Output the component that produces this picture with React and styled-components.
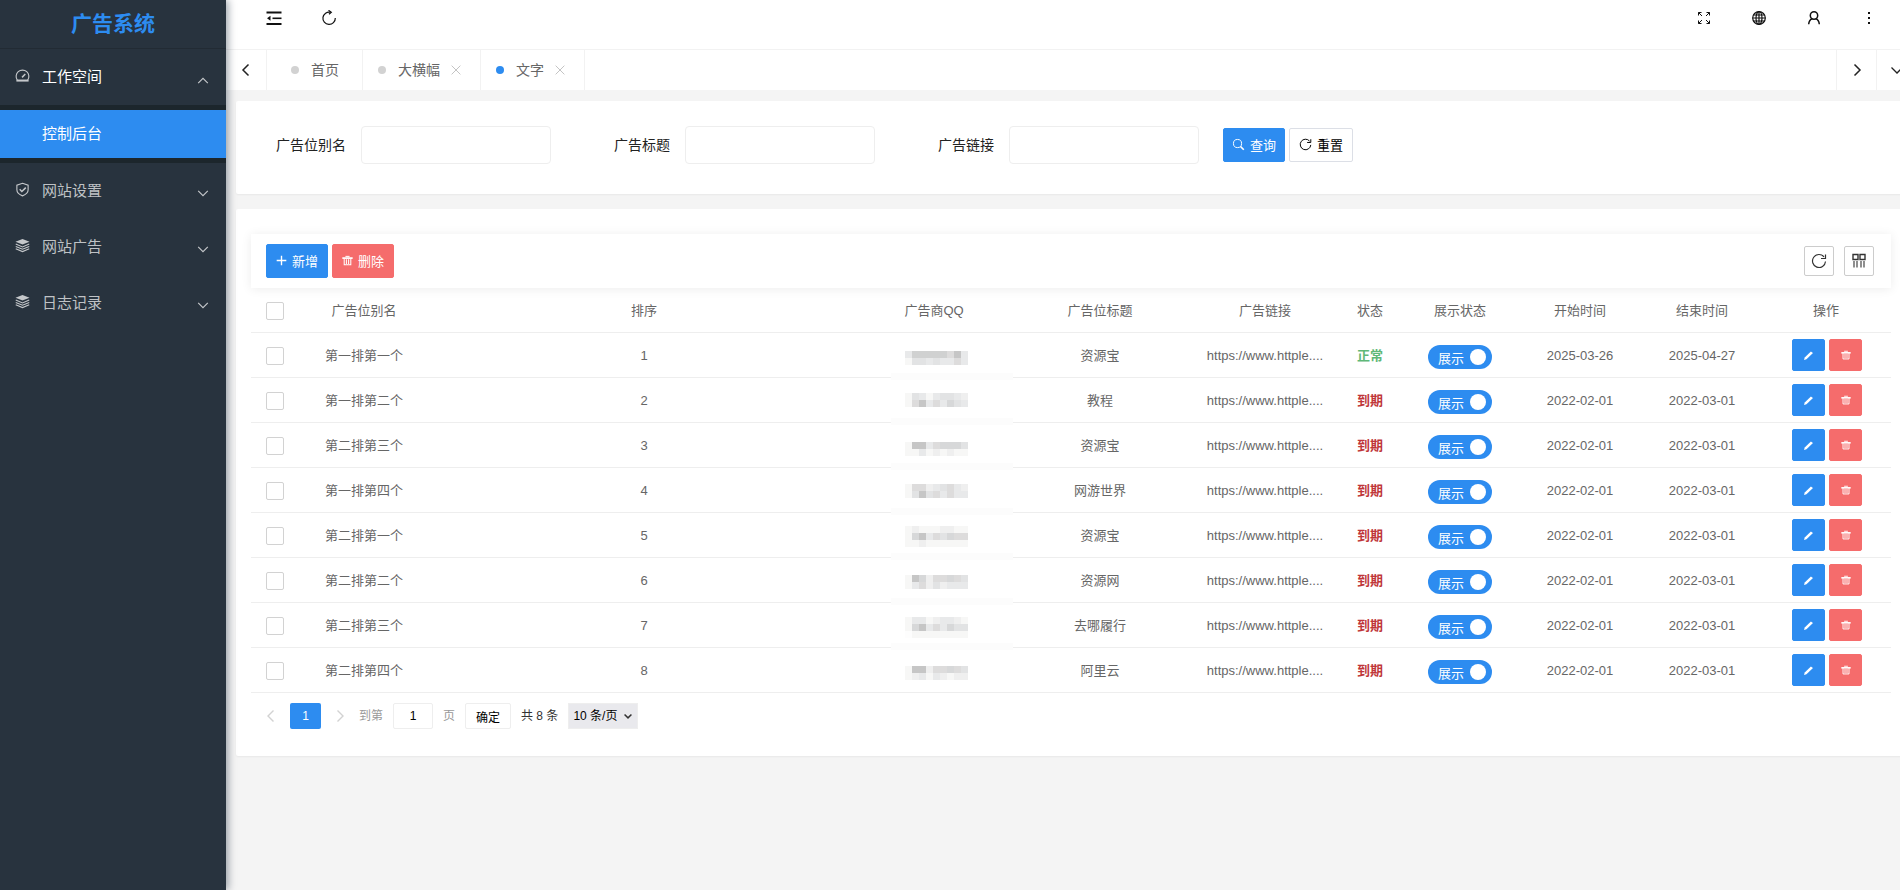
import React, { useState } from "react";
import styled, { createGlobalStyle, css } from "styled-components";

const GlobalStyle = createGlobalStyle`
  * {
    box-sizing: border-box;
  }
  body {
    margin: 0;
    background: #f4f4f4;
    color: #222;
    font: 14px/24px "Liberation Sans", "Noto Sans CJK SC", sans-serif;
    overflow-x: hidden;
  }
  button, input, select {
    font-family: inherit;
  }
  button {
    cursor: pointer;
  }
  svg {
    display: block;
    flex: none;
  }
`;

const paths = {
  shrink: (
    <>
      <path d="M.5 2.5h15M.5 14h15" strokeWidth="1.8" />
      <path d="M6.5 8.3h9" strokeWidth="1.6" />
      <path d="M4.5 5.8v5L1 8.3z" fill="currentColor" stroke="none" />
    </>
  ),
  refresh: (
    <>
      <path d="M9.5 2.2A6.2 6.2 0 1 0 14.3 8" />
      <path d="M7.5.3l2.8 1.9L8 4.3" />
    </>
  ),
  reload: (
    <>
      <path d="M14.5 8.5A6.5 6.5 0 1 1 13 3.8" />
      <path d="M14.5 1.5v4H10" />
    </>
  ),
  expand: (
    <path d="M2.5 5.5v-3h3M2.5 2.5L6 6M10.5 2.5h3v3M13.5 2.5L10 6M2.5 10.5v3h3M2.5 13.5L6 10M13.5 10.5v3h-3M13.5 13.5L10 10" />
  ),
  globe: (
    <>
      <circle cx="8" cy="8" r="6.3" />
      <ellipse cx="8" cy="8" rx="3" ry="6.3" />
      <path d="M8 1.7v12.6M1.7 8h12.6M2.7 5h10.6M2.7 11h10.6" />
    </>
  ),
  user: (
    <>
      <circle cx="8" cy="5.5" r="3.7" />
      <path d="M2.7 14.3c.2-3 1.6-5 3.6-5.6M13.3 14.3c-.2-3-1.6-5-3.6-5.6" />
    </>
  ),
  more: <path d="M7 2h2v2H7zM7 7h2v2H7zM7 12h2v2H7z" fill="currentColor" stroke="none" />,
  left: <path d="M10.5 2.5L5 8l5.5 5.5" />,
  right: <path d="M5.5 2.5L11 8l-5.5 5.5" />,
  down: <path d="M2.5 5.5L8 11l5.5-5.5" />,
  up: <path d="M2.5 10.5L8 5l5.5 5.5" />,
  close: <path d="M3 3l10 10M13 3L3 13" />,
  plus: <path d="M8 1v14M1 8h14" strokeWidth="2" />,
  search: (
    <>
      <circle cx="6.8" cy="6.8" r="5" />
      <path d="M10.5 10.5l4 4" strokeWidth="2" />
    </>
  ),
  trash: (
    <>
      <path d="M5 2h6" strokeWidth="1.5" />
      <path d="M.5 4.5h15" strokeWidth="2.5" />
      <path d="M3.2 5v9.3h9.6V5M6.4 6v7M9.6 6v7" strokeWidth="1.5" />
    </>
  ),
  edit: <path d="M1.5 14.5l1-3.5 9-9 3 2.5L5 13.5z" fill="currentColor" stroke="none" />,
  dashboard: (
    <>
      <path d="M2.5 13A6.8 6.8 0 1 1 13.5 13z" />
      <path d="M7.5 10L11 6.5" strokeWidth="1.6" />
      <path d="M1.5 13.5h13" strokeWidth="2" />
    </>
  ),
  shield: (
    <>
      <path d="M8 1.3l6 2v5c0 3-2.5 5.2-6 6.5-3.5-1.3-6-3.5-6-6.5v-5z" />
      <path d="M5 7.8l2.3 2.3L11.5 6" strokeWidth="1.6" />
    </>
  ),
  layers: (
    <>
      <path d="M8 1l7.5 3L8 7 .5 4z" fill="currentColor" stroke="none" />
      <path d="M.8 6.5L8 9.5l7.2-3M.8 9L8 12l7.2-3M.8 11.5L8 14.5l7.2-3" />
    </>
  ),
  columns: (
    <>
      <path d="M2 1.5h5v5H2zM9 1.5h5v5H9z" strokeWidth="1.4" />
      <path d="M3 8v6.5M6 8v6.5M10 8v6.5M13 8v6.5" />
    </>
  ),
};

const Icon = ({ name, size = 16, stroke = 1.2 }) => (
  <svg
    width={size}
    height={size}
    viewBox="0 0 16 16"
    fill="none"
    stroke="currentColor"
    strokeWidth={stroke}
    aria-hidden="true"
  >
    {paths[name]}
  </svg>
);

// obscured account numbers: one digit per block, the higher the darker
const mosaics = [
  { top: 18, rows: ["377777583", "144343353"] },
  { top: 15, rows: ["143134432", "158353643"] },
  { top: 19, rows: ["188356664", "113121211"] },
  { top: 16, rows: ["155234532", "148453533"] },
  { top: 13, rows: ["121112211", "168354655", "112111111"] },
  { top: 17, rows: ["186255654", "135242333"] },
  { top: 14, rows: ["133123321", "168353644", "011111111"] },
  { top: 18, rows: ["188255654", "123132122"] },
];
const greys = ["#fdfdfd", "#f7f7f6", "#efefef", "#e8e9ea", "#e2e3e4", "#dddcdc", "#d7d8d9", "#d0d1d1", "#c6c6c6"];

const Mosaic = ({ index }) => {
  const { top, rows } = mosaics[index];
  return (
    <MosaicSvg width="122" height="47" viewBox="0 0 122 47" shapeRendering="crispEdges">
      {index < 7 && <rect x="0" y="40" width="122" height="7" fill="#fcfcfc" />}
      {rows.map((row, y) =>
        row.split("").map((level, x) => (
          <rect
            key={`${x}-${y}`}
            x={14 + x * 7}
            y={top + y * 7}
            width="7"
            height="7"
            fill={greys[level]}
          />
        ))
      )}
    </MosaicSvg>
  );
};

const menus = [
  { icon: "dashboard", label: "工作空间", open: true, items: ["控制后台"] },
  { icon: "shield", label: "网站设置", items: [] },
  { icon: "layers", label: "网站广告", items: [] },
  { icon: "layers", label: "日志记录", items: [] },
];

const tabs = [
  { label: "首页" },
  { label: "大横幅", closable: true },
  { label: "文字", closable: true, active: true },
];

const ads = [
  { name: "第一排第一个", title: "资源宝", ok: true, start: "2025-03-26", end: "2025-04-27" },
  { name: "第一排第二个", title: "教程" },
  { name: "第二排第三个", title: "资源宝" },
  { name: "第一排第四个", title: "网游世界" },
  { name: "第二排第一个", title: "资源宝" },
  { name: "第二排第二个", title: "资源网" },
  { name: "第二排第三个", title: "去哪履行" },
  { name: "第二排第四个", title: "阿里云" },
];

const columns = [
  { label: "广告位别名", width: 126 },
  { label: "排序" },
  { label: "广告商QQ", width: 146 },
  { label: "广告位标题", width: 186 },
  { label: "广告链接", width: 144 },
  { label: "状态", width: 66 },
  { label: "展示状态", width: 114 },
  { label: "开始时间", width: 126 },
  { label: "结束时间", width: 118 },
  { label: "操作", width: 130 },
];

const App = () => {
  const [page, setPage] = useState("1");
  return (
    <Layout>
      <GlobalStyle />
      <Sidebar>
        <Logo>广告系统</Logo>
        <nav>
          {menus.map((menu) => (
            <React.Fragment key={menu.label}>
              <MenuButton $open={menu.open}>
                <Icon name={menu.icon} size={15} />
                <span>{menu.label}</span>
                <Icon name={menu.open ? "up" : "down"} size={14} stroke={1.3} />
              </MenuButton>
              {menu.open && (
                <SubMenu>
                  {menu.items.map((item) => (
                    <SubLink key={item} href="#">
                      {item}
                    </SubLink>
                  ))}
                </SubMenu>
              )}
            </React.Fragment>
          ))}
        </nav>
      </Sidebar>
      <Body>
        <Main>
          <Header>
            <HeaderButton aria-label="收起菜单"><Icon name="shrink" /></HeaderButton>
            <HeaderButton aria-label="刷新"><Icon name="refresh" /></HeaderButton>
            <Spacer />
            <HeaderButton aria-label="全屏"><Icon name="expand" stroke={1} /></HeaderButton>
            <HeaderButton aria-label="网站"><Icon name="globe" /></HeaderButton>
            <HeaderButton aria-label="用户"><Icon name="user" stroke={1.5} /></HeaderButton>
            <HeaderButton aria-label="更多"><Icon name="more" /></HeaderButton>
          </Header>
          <TabBar>
            <TabArrow aria-label="向左" $side="left"><Icon name="left" stroke={1.5} /></TabArrow>
            {tabs.map((tab) => (
              <Tab key={tab.label} $closable={tab.closable}>
                <Dot $active={tab.active} />
                <TabLink href="#">{tab.label}</TabLink>
                {tab.closable && (
                  <CloseButton aria-label="关闭"><Icon name="close" size={14} stroke={1} /></CloseButton>
                )}
              </Tab>
            ))}
            <Spacer />
            <TabArrow aria-label="向右"><Icon name="right" stroke={1.5} /></TabArrow>
            <TabArrow aria-label="展开"><Icon name="down" stroke={1.3} /></TabArrow>
          </TabBar>
          <Content>
            <SearchCard>
              {["广告位别名", "广告标题", "广告链接"].map((label, i) => (
                <Field key={label}>
                  <label htmlFor={`field-${i}`}>{label}</label>
                  <TextInput id={`field-${i}`} />
                </Field>
              ))}
              <SearchButtons>
                <Button $kind="primary"><Icon name="search" size={13} />查询</Button>
                <ResetButton><Icon name="reload" size={13} />重置</ResetButton>
              </SearchButtons>
            </SearchCard>
            <TableCard>
              <Toolbar>
                <Button $kind="primary"><Icon name="plus" size={11} />新增</Button>
                <Button $kind="danger"><Icon name="trash" size={11} />删除</Button>
                <Spacer />
                <ToolButton aria-label="刷新表格"><Icon name="reload" stroke={1.2} /></ToolButton>
                <ToolButton aria-label="筛选列"><Icon name="columns" stroke={1.1} /></ToolButton>
              </Toolbar>
              <Table>
                <thead>
                  <tr>
                    <Th $width={50}><Checkbox type="checkbox" aria-label="全选" /></Th>
                    {columns.map((col) => (
                      <Th key={col.label} $width={col.width}>{col.label}</Th>
                    ))}
                  </tr>
                </thead>
                <tbody>
                  {ads.map((ad, i) => (
                    <tr key={i}>
                      <Td><Checkbox type="checkbox" aria-label={ad.name} /></Td>
                      <Td>{ad.name}</Td>
                      <Td>{i + 1}</Td>
                      <MosaicTd><Mosaic index={i} /></MosaicTd>
                      <Td>{ad.title}</Td>
                      <Td>https://www.httple....</Td>
                      <Td><Status $ok={ad.ok}>{ad.ok ? "正常" : "到期"}</Status></Td>
                      <Td>
                        <Switch role="switch" aria-checked="true">展示<Knob /></Switch>
                      </Td>
                      <Td>{ad.start || "2022-02-01"}</Td>
                      <Td>{ad.end || "2022-03-01"}</Td>
                      <Td>
                        <Actions>
                          <ActionButton $kind="primary" aria-label="编辑"><Icon name="edit" size={11} /></ActionButton>
                          <ActionButton $kind="danger" aria-label="删除"><Icon name="trash" size={10} /></ActionButton>
                        </Actions>
                      </Td>
                    </tr>
                  ))}
                </tbody>
              </Table>
              <Pager>
                <PageArrow aria-label="上一页"><Icon name="left" stroke={1.4} /></PageArrow>
                <PageCurrent>1</PageCurrent>
                <PageArrow aria-label="下一页"><Icon name="right" stroke={1.4} /></PageArrow>
                <PageJump>
                  到第
                  <PageInput aria-label="页码" value={page} onChange={(e) => setPage(e.target.value)} />
                  页
                </PageJump>
                <PageConfirm>确定</PageConfirm>
                <span>共 8 条</span>
                <PageSize>
                  <select aria-label="每页条数">
                    <option>10 条/页</option>
                    <option>20 条/页</option>
                  </select>
                  <Icon name="down" size={10} stroke={2.4} />
                </PageSize>
              </Pager>
            </TableCard>
          </Content>
        </Main>
      </Body>
    </Layout>
  );
};

const MosaicSvg = styled.svg`
  position: absolute;
  top: 0;
  left: 30px;
`;

const Layout = styled.div`
  display: flex;
  min-height: 100vh;
`;

const Sidebar = styled.aside`
  flex: none;
  width: 226px;
  background: #28333e;
  box-shadow: 2px 0 8px rgba(0, 21, 41, 0.4);
  z-index: 1;
`;

const Logo = styled.h1`
  margin: 0;
  height: 49px;
  border-bottom: 1px solid #222b34;
  color: #2d8cf0;
  font-size: 21px;
  line-height: 48px;
  text-align: center;
`;

const MenuButton = styled.button`
  display: flex;
  align-items: center;
  gap: 12px;
  width: 100%;
  height: 56px;
  padding: 0 16px 3px 15px;
  border: 0;
  background: none;
  color: ${(p) => (p.$open ? "#fff" : "#bfc2c5")};
  font-size: 15px;
  text-align: left;

  span {
    flex: 1;
  }
  svg {
    color: #c5c8cb;
  }
  svg:last-child {
    margin-top: ${(p) => (p.$open ? 11 : 6)}px;
  }
`;

const SubMenu = styled.div`
  padding: 5px 0;
  background: #1c262c;
`;

const SubLink = styled.a`
  display: block;
  padding-left: 42px;
  background: #2d8cf0;
  color: #fff;
  font-size: 15px;
  line-height: 48px;
  text-decoration: none;
`;

const Body = styled.div`
  flex: 1;
  min-width: 0;
  overflow: hidden;
`;

/* the content frame runs one scrollbar wider than the window */
const Main = styled.div`
  width: calc(100% + 16px);
`;

const Spacer = styled.div`
  flex: 1;
`;

const Header = styled.header`
  display: flex;
  height: 50px;
  padding: 0 20px;
  border-bottom: 1px solid #f2f2f2;
  background: #fff;
`;

const HeaderButton = styled.button`
  display: flex;
  justify-content: center;
  width: 55px;
  padding: 10px 0 0;
  border: 0;
  background: none;
  color: #111;
`;

const TabBar = styled.div`
  display: flex;
  height: 40px;
  background: #fff;
`;

const TabArrow = styled.button`
  display: flex;
  align-items: center;
  justify-content: center;
  width: ${(p) => (p.$side === "left" ? 41 : 40)}px;
  padding: 0;
  border: 0 solid #f2f2f2;
  border-${(p) => (p.$side === "left" ? "right" : "left")}-width: 1px;
  background: none;
  color: #222;
`;

const Tab = styled.div`
  display: flex;
  align-items: center;
  padding: 0 ${(p) => (p.$closable ? 17 : 23)}px 0 ${(p) => (p.$closable ? 15 : 24)}px;
  border-right: 1px solid #f2f2f2;
  color: #666;
`;

const Dot = styled.span`
  width: 8px;
  height: 8px;
  margin-right: 12px;
  border-radius: 50%;
  background: ${(p) => (p.$active ? "#2d8cf0" : "#d2d2d2")};
`;

const TabLink = styled.a`
  color: inherit;
  text-decoration: none;
`;

const CloseButton = styled.button`
  margin-left: 9px;
  padding: 0;
  border: 0;
  background: none;
  color: #bbb;
`;

const Content = styled.main`
  padding: 11px 10px;
`;

const Card = styled.section`
  border-radius: 2px;
  background: #fff;
  box-shadow: 0 1px 2px rgba(0, 0, 0, 0.05);
`;

const SearchCard = styled(Card)`
  display: flex;
  padding: 25px 15px 30px;
  margin-bottom: 15px;
`;

const Field = styled.div`
  display: flex;
  align-items: center;

  label {
    width: 110px;
    padding-right: 15px;
    text-align: right;
  }
  & + & label {
    width: 134px;
  }
`;

const TextInput = styled.input`
  width: 190px;
  height: 38px;
  padding: 0 10px;
  border: 1px solid #eee;
  border-radius: 4px;
  outline: none;
`;

const SearchButtons = styled.div`
  display: flex;
  align-items: center;
  gap: 4px;
  padding-left: 24px;
`;

const kinds = {
  primary: css`
    border-color: #2d8cf0;
    background: #2d8cf0;
    color: #fff;
  `,
  danger: css`
    border-color: #f56c6c;
    background: #f56c6c;
    color: #fff;
  `,
};

const Button = styled.button`
  display: flex;
  align-items: center;
  justify-content: center;
  gap: 5px;
  width: 62px;
  height: 34px;
  padding: 0 0 2px;
  border: 1px solid #dcdfe6;
  border-radius: 2px;
  background: #fff;
  color: #000;
  font-size: 13px;
  ${(p) => kinds[p.$kind]}
`;

const ResetButton = styled(Button)`
  width: 64px;
`;

const TableCard = styled(Card)`
  padding: 25px 15px 27px;
`;

const Toolbar = styled.div`
  display: flex;
  align-items: center;
  gap: 4px;
  height: 54px;
  padding: 0 17px 0 15px;
  box-shadow: 0 1px 10px rgba(0, 0, 0, 0.08);
`;

const ToolButton = styled.button`
  display: flex;
  align-items: center;
  justify-content: center;
  width: 30px;
  height: 30px;
  padding: 0;
  border: 1px solid #ccc;
  border-radius: 2px;
  background: #fff;
  color: #333;

  & + & {
    margin-left: 6px;
  }
`;

const Table = styled.table`
  width: 100%;
  border-collapse: separate;
  border-spacing: 0;
  table-layout: fixed;
  color: #666;
  font-size: 13px;
  text-align: center;
`;

const cell = css`
  height: 45px;
  padding: 2px 0 0;
  border-bottom: 1px solid #eee;
  font-weight: 400;
  white-space: nowrap;
`;

const Th = styled.th`
  ${cell}
  width: ${(p) => (p.$width ? `${p.$width}px` : "auto")};
`;

const Td = styled.td`
  ${cell}
`;

const MosaicTd = styled(Td)`
  position: relative;
`;

const Checkbox = styled.input`
  display: block;
  width: 18px;
  height: 18px;
  margin: 0 0 0 15px;
  border: 1px solid #d2d2d2;
  border-radius: 2px;
  background: #fff;
  appearance: none;

  &:checked {
    border-color: #2d8cf0;
    background: #2d8cf0;
  }
`;

const Status = styled.b`
  color: ${(p) => (p.$ok ? "#5fb878" : "#c03639")};
`;

const Switch = styled.button`
  display: flex;
  align-items: center;
  gap: 6px;
  height: 24px;
  margin: 2px auto 0;
  padding: 0 6px 0 10px;
  border: 0;
  border-radius: 12px;
  background: #2d8cf0;
  color: #fff;
  font-size: 13px;
`;

const Knob = styled.span`
  width: 16px;
  height: 16px;
  border-radius: 50%;
  background: #fff;
`;

const Actions = styled.div`
  display: flex;
  justify-content: center;
  gap: 4px;
  padding: 0 0 2px 2px;
`;

const ActionButton = styled(Button)`
  width: 33px;
  height: 32px;
  padding: 0;
`;

const Pager = styled.div`
  display: flex;
  align-items: center;
  gap: 10px;
  padding: 10px 11px 0;
  color: #333;
  font-size: 12px;
`;

const PageArrow = styled.button`
  padding: 0 1px;
  border: 0;
  background: none;
  color: #d2d2d2;
`;

const PageCurrent = styled.button`
  width: 31px;
  height: 26px;
  border: 0;
  border-radius: 2px;
  background: #2d8cf0;
  color: #fff;
  font-size: 12px;
`;

const PageJump = styled.label`
  display: flex;
  align-items: center;
  gap: 10px;
  color: #999;
`;

const PageInput = styled.input`
  width: 40px;
  height: 26px;
  border: 1px solid #eee;
  border-radius: 2px;
  text-align: center;
  font-size: 12px;
`;

const PageConfirm = styled.button`
  width: 46px;
  height: 26px;
  padding: 0;
  border: 1px solid #eee;
  border-radius: 2px;
  background: #fff;
  font-size: 12px;
`;

const PageSize = styled.div`
  display: flex;
  align-items: center;
  width: 70px;
  height: 26px;
  padding: 0 4px;
  border: 1px solid #eee;
  background: #e9e9ed;

  select {
    flex: 1;
    min-width: 0;
    padding: 0;
    border: 0;
    background: none;
    color: #000;
    font-size: 12px;
    appearance: none;
  }
`;

export default App;
